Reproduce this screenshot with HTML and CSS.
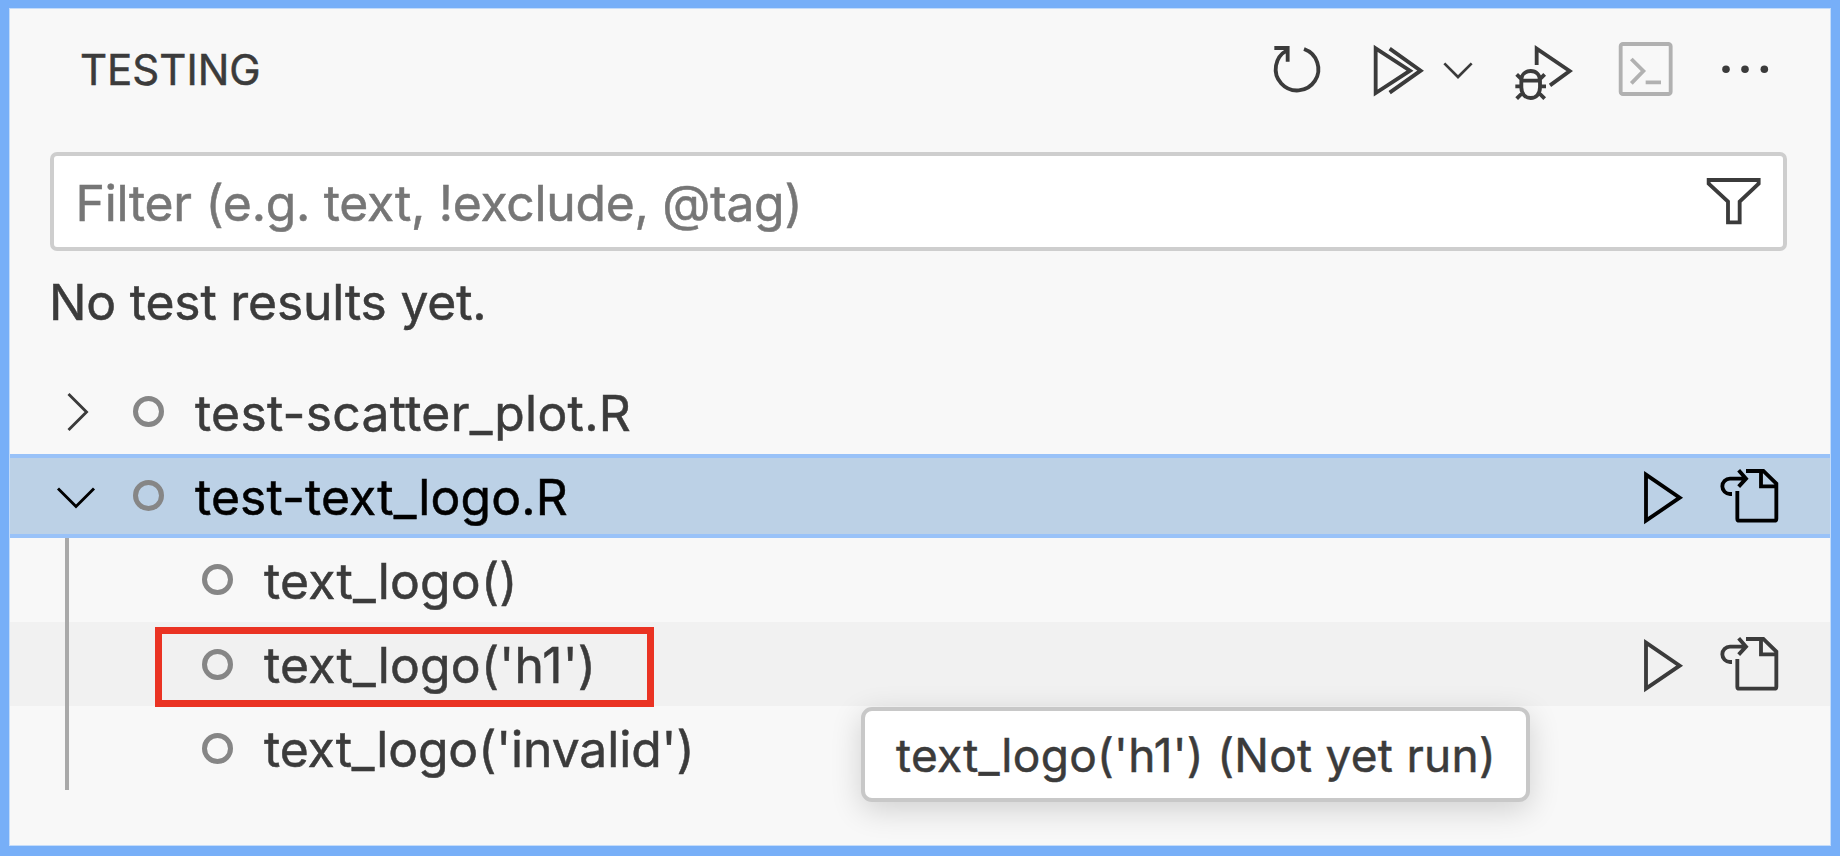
FILE: index.html
```html
<!DOCTYPE html>
<html lang="en">
<head>
<meta charset="utf-8">
<title>Testing</title>
<link rel="stylesheet" href="styles.css">
</head>
<body>
<svg class="defs" width="0" height="0">
  <symbol id="play" viewBox="120 42 132 252"><path d="M138 104 L239 173 L138 242Z"/></symbol>
  <symbol id="goto" viewBox="354 42 192 252">
    <path d="M438 93H490L529 131V236q0 6-6 6H418q-6 0-6-6V153M483 93V139H529"/>
    <path d="M396 162H390a23 23 0 0 1 0-46H438M416 91L438 116L416 140"/>
  </symbol>
</svg>
<main class="panel">
  <header class="header">
    <h1 class="title">TESTING</h1>
    <div class="toolbar">
      <svg class="icon refresh" viewBox="90 60 162 180"><path d="M103 84H143V125M141 91A64 64 0 1 0 192 87"/></svg>
      <svg class="icon run-all" viewBox="390 60 171 180"><path d="M407 85L510 152L407 219ZM449 86L542 152L449 218"/></svg>
      <svg class="icon more-runs" viewBox="600 60 108 180"><path d="M613 130L654 171L695 130"/></svg>
      <svg class="icon debug" viewBox="36 60 192 180"><path d="M110 135V86L209 153L150 196"/><path d="M64 182c0-18 12-29 28-29s28 11 28 29v20c0 20-12 32-28 32s-28-12-28-32zM64 182H120M46 199H64M120 199H138M50 163L65 178M134 163L119 178M50 236L67 219M134 236L117 219"/></svg>
      <svg class="icon terminal" viewBox="348 60 180 180"><rect x="362" y="72" width="150" height="150" rx="7"/><path d="M394 117L430 153L394 190M437 187H483"/></svg>
      <svg class="icon dots" viewBox="660 60 150 180"><circle cx="678" cy="148" r="11.3"/><circle cx="735" cy="148" r="11.3"/><circle cx="793" cy="148" r="11.3"/></svg>
    </div>
  </header>
  <div class="filter">
    <span class="placeholder">Filter (e.g. text, !exclude, @tag)</span>
    <svg class="icon funnel" viewBox="612 468 180 150"><path d="M626 480H776V491L719 545V607H684V545L626 491Z"/></svg>
  </div>
  <p class="status">No test results yet.</p>
  <div class="tree">
    <div class="row">
      <svg class="icon chevron" viewBox="0 0 40 40"><path d="M12.5 2L30.5 20L12.5 38"/></svg>
      <i class="ring"></i><span class="label file">test-scatter_plot.R</span>
    </div>
    <div class="row selected">
      <svg class="icon chevron" viewBox="0 0 40 40"><path d="M2 12.5L20 30.5L38 12.5"/></svg>
      <i class="ring"></i><span class="label open-file">test-text_logo.R</span>
      <div class="actions"><svg class="icon play"><use href="#play"/></svg><svg class="icon goto"><use href="#goto"/></svg></div>
    </div>
    <div class="children">
      <div class="row child"><i class="ring"></i><span class="label case">text_logo()</span></div>
      <div class="row child hovered"><i class="ring"></i><span class="label case">text_logo('h1')</span>
        <div class="actions"><svg class="icon play"><use href="#play"/></svg><svg class="icon goto"><use href="#goto"/></svg></div>
        <div class="highlight"></div>
      </div>
      <div class="row child"><i class="ring"></i><span class="label long-case">text_logo('invalid')</span></div>
      <div class="guide"></div>
    </div>
  </div>
  <div class="tooltip">text_logo('h1') (Not yet run)</div>
</main>
</body>
</html>
```
FILE: styles.css
```css
* { box-sizing: border-box; }
body {
  margin: 0;
  background: #77aff8;
  font-family: Inter, "Liberation Sans", sans-serif;
  font-size: 49.8px;
  color: #3b3b3b;
  -webkit-text-stroke: .5px currentColor;
}
.defs { display: block; height: 0; }
.panel {
  position: relative;
  width: 1822px;
  height: 838px;
  margin: 8px 0 0 9px;
  background: #f8f8f8;
  border: 1px solid #c4dcfa;
  overflow: hidden;
}
.header {
  display: flex;
  align-items: flex-start;
  justify-content: space-between;
  height: 142.5px;
  padding: 31px 60px 0 70px;
}
.title { margin: 0; padding-top: 2px; font-size: 42px; font-weight: 400; line-height: 56px; white-space: nowrap; }
.toolbar { display: flex; }
.icon {
  display: block;
  flex: none;
  fill: none;
  stroke: currentColor;
  stroke-width: 11.5;
}
.refresh { width: 54px; height: 60px; margin-right: 46px; }
.run-all { width: 57px; height: 60px; margin-right: 13px; }
.more-runs { width: 36px; height: 60px; margin-right: 36px; stroke-width: 8; }
.debug { width: 64px; height: 60px; margin-right: 40px; }
.terminal { width: 60px; height: 60px; margin-right: 44px; color: #b1b1b1; }
.dots { width: 50px; height: 60px; fill: currentColor; stroke: none; }
.filter {
  display: flex;
  align-items: center;
  justify-content: space-between;
  width: 1737px;
  height: 99px;
  margin-left: 40px;
  padding: 0 19px 0 21.5px;
  background: #fff;
  border: 4px solid #cecece;
  border-radius: 7px;
}
.placeholder { padding-top: 3px; color: #767676; letter-spacing: -.26px; white-space: nowrap; }
.funnel { width: 60px; height: 50px; margin-bottom: 1px; }
.status { margin: 19.5px 0 0 39px; line-height: 64px; letter-spacing: -.18px; white-space: nowrap; }
.tree { padding-top: 35.5px; }
.row {
  position: relative;
  display: flex;
  align-items: center;
  height: 84.2px;
  padding-left: 46px;
}
.chevron { width: 40px; height: 40px; stroke-width: 2.9; }
.ring {
  flex: none;
  width: 31px;
  height: 31px;
  margin: 0 31px 0 37px;
  border: 5.5px solid #868686;
  border-radius: 50%;
}
.label { padding-top: 2px; line-height: 60px; white-space: nowrap; }
.file { letter-spacing: .29px; }
.open-file { letter-spacing: .14px; }
.case { letter-spacing: .23px; }
.long-case { letter-spacing: -.08px; }
.selected { color: #000; background: #bcd1e6; border-top: 4px solid #99c2f8; border-bottom: 4px solid #99c2f8; }
.children { position: relative; }
.child { padding-left: 155px; }
.hovered { background: #f1f1f1; }
.actions { display: flex; margin-left: auto; padding-right: 48px; }
.play { width: 44px; height: 84px; margin-right: 34px; }
.goto { width: 64px; height: 84px; }
.guide { position: absolute; top: 0; left: 54.5px; width: 4px; height: 252.6px; background: #a9a9a9; }
.highlight { position: absolute; left: 145px; top: 5px; width: 499px; height: 80px; border: 7px solid #ea3323; }
.tooltip {
  position: absolute;
  left: 851px;
  top: 697.5px;
  width: 669px;
  height: 95px;
  padding-left: 31px;
  font-size: 46px;
  line-height: 89px;
  letter-spacing: .28px;
  white-space: nowrap;
  background: #fff;
  border: 4px solid #c8c8c8;
  border-radius: 11px;
  box-shadow: 0 8px 31px rgba(0, 0, 0, .16);
}
```
